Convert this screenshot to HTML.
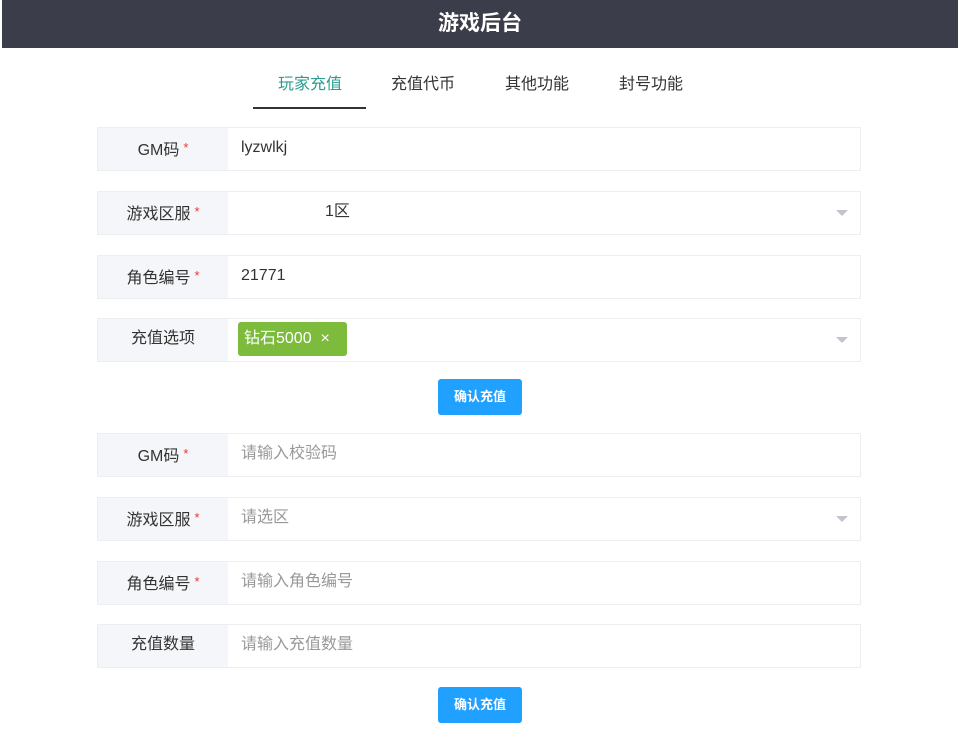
<!DOCTYPE html>
<html><head><meta charset="utf-8"><style>
*{margin:0;padding:0;box-sizing:border-box}
body{width:960px;height:734px;background:#fff;font-family:"Liberation Sans","Noto Sans CJK SC",sans-serif;position:relative;overflow:hidden;color:#333}
.hd{position:absolute;left:2px;top:0;width:956px;height:48px;background:#3b3d4b;color:#fff;font-weight:bold;font-size:21px;text-align:center;line-height:48px}
.tab{position:absolute;top:74px;font-size:16px;color:#333;width:80px;text-align:center;line-height:22px}
.ul{position:absolute;left:253px;top:107px;width:113px;height:2px;background:#333}
.row{position:absolute;left:97px;width:764px;height:44px;border:1px solid #eceef2}
.lb{position:absolute;left:0;top:0;width:130px;height:42px;background:#f5f6f9;text-align:center;line-height:40px;font-size:16px;color:#333}
.lb i{color:#e33;font-style:normal;font-size:13px;vertical-align:3px;margin-left:4px}
.v{position:absolute;left:143px;top:0;line-height:40px;font-size:16px;color:#333}
.ph{color:#999}
.ar{position:absolute;right:12px;top:18px;width:0;height:0;border-left:6px solid transparent;border-right:6px solid transparent;border-top:6px solid #c0c4cc}
.tag{position:absolute;left:140px;top:3px;height:34px;width:109px;background:#7dbb3c;color:#fff;border-radius:3px;font-size:16px;line-height:34px;padding-left:6px}
.btn{position:absolute;left:438px;width:84px;height:36px;background:#20a0ff;color:#fff;border-radius:3px;font-size:13px;font-weight:bold;text-align:center;line-height:36px}
</style></head><body>
<div class="hd">游戏后台</div>
<div class="tab" style="left:270px;color:#2a9d8f">玩家充值</div>
<div class="tab" style="left:383px">充值代币</div>
<div class="tab" style="left:497px">其他功能</div>
<div class="tab" style="left:611px">封号功能</div>
<div class="ul"></div>

<div class="row" style="top:127px"><div class="lb">GM码<i>*</i></div><div class="v">lyzwlkj</div></div>
<div class="row" style="top:191px"><div class="lb">游戏区服<i>*</i></div><div class="v" style="left:227px">1区</div><div class="ar"></div></div>
<div class="row" style="top:255px"><div class="lb">角色编号<i>*</i></div><div class="v">21771</div></div>
<div class="row" style="top:318px"><div class="lb">充值选项</div><div class="tag">钻石5000 &nbsp;×</div><div class="ar"></div></div>
<div class="btn" style="top:379px">确认充值</div>

<div class="row" style="top:433px"><div class="lb">GM码<i>*</i></div><div class="v ph">请输入校验码</div></div>
<div class="row" style="top:497px"><div class="lb">游戏区服<i>*</i></div><div class="v ph">请选区</div><div class="ar"></div></div>
<div class="row" style="top:561px"><div class="lb">角色编号<i>*</i></div><div class="v ph">请输入角色编号</div></div>
<div class="row" style="top:624px"><div class="lb">充值数量</div><div class="v ph">请输入充值数量</div></div>
<div class="btn" style="top:687px">确认充值</div>
</body></html>
